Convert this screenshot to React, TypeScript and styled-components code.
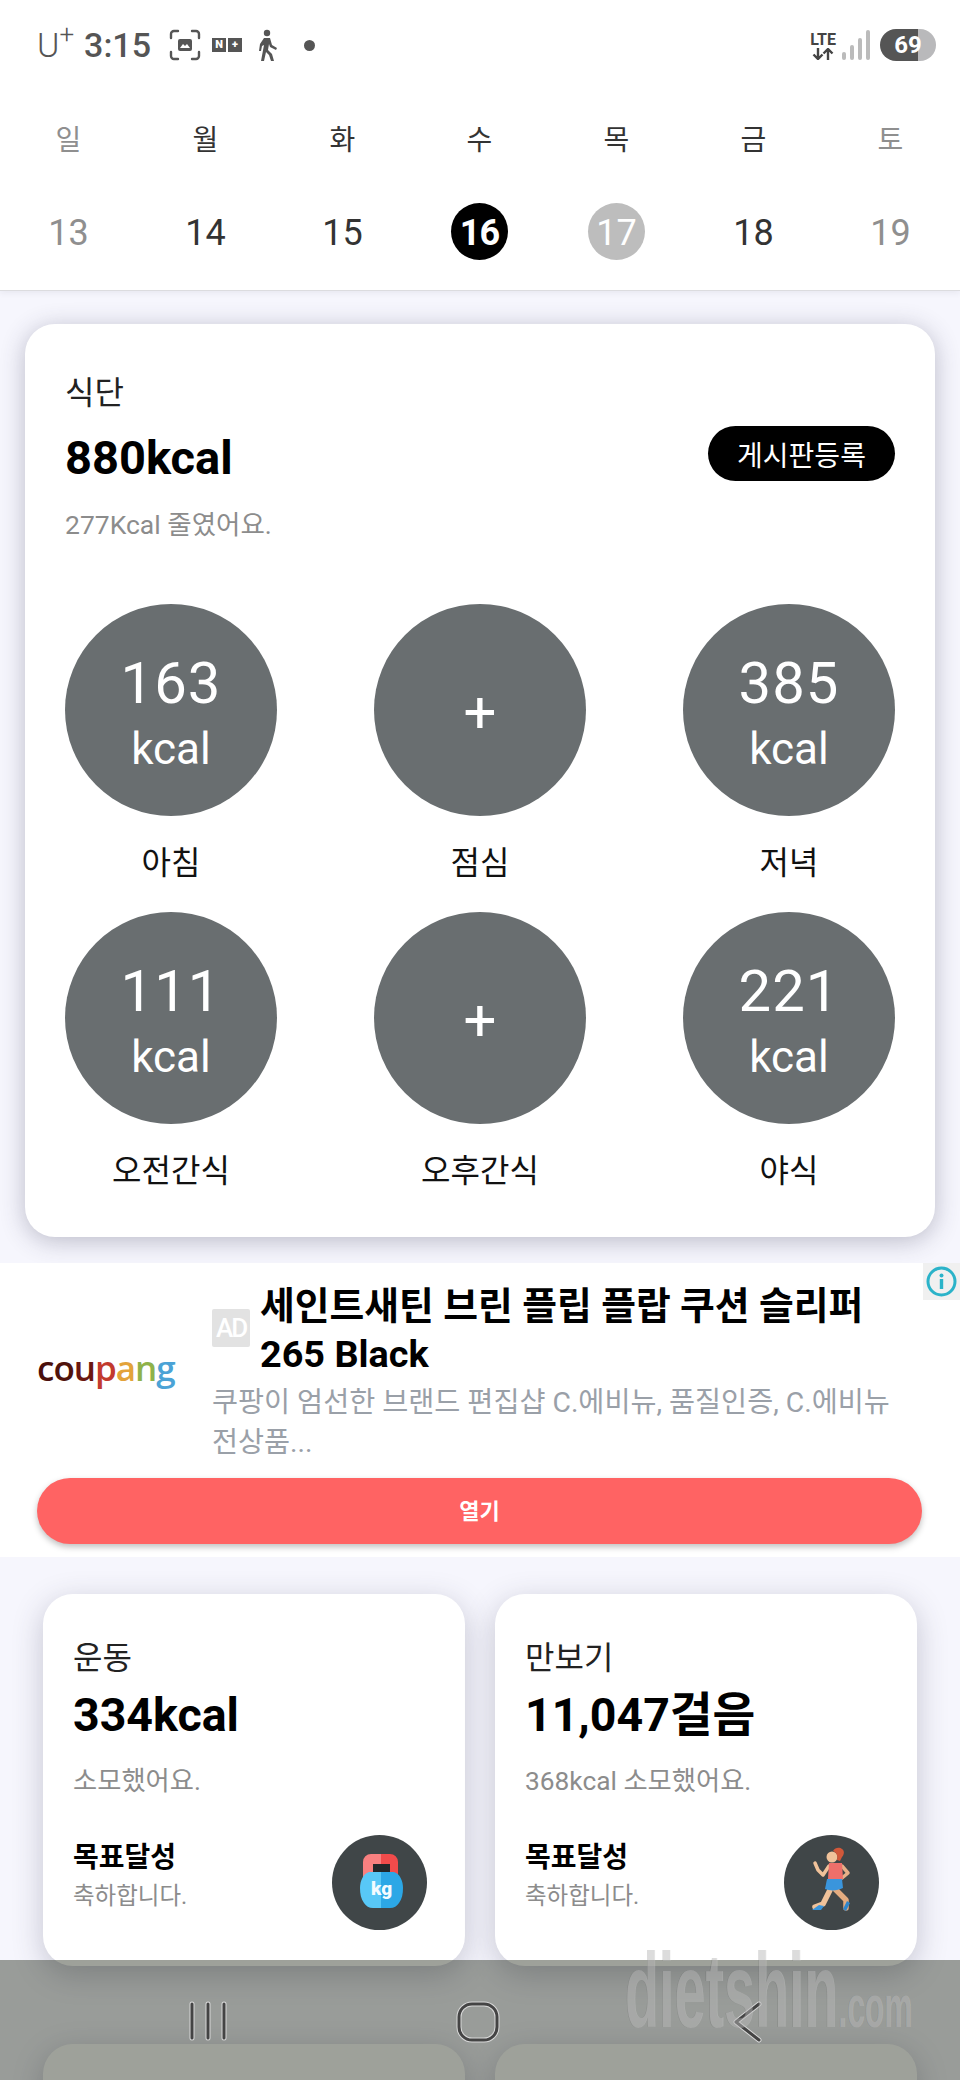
import React from 'react'
import styled, { createGlobalStyle } from 'styled-components'

const GlobalStyle = createGlobalStyle`
    html, body {
        margin: 0;
        padding: 0;
        background: #f6f6fd;
    }
    * {
        box-sizing: border-box;
    }
`

const weekDays = [
    { name: '일', date: 13, tone: 'muted' },
    { name: '월', date: 14, tone: 'plain' },
    { name: '화', date: 15, tone: 'plain' },
    { name: '수', date: 16, tone: 'today' },
    { name: '목', date: 17, tone: 'picked' },
    { name: '금', date: 18, tone: 'plain' },
    { name: '토', date: 19, tone: 'muted' },
]

const meals = [
    { label: '아침', kcal: '163' },
    { label: '점심' },
    { label: '저녁', kcal: '385' },
    { label: '오전간식', kcal: '111' },
    { label: '오후간식' },
    { label: '야식', kcal: '221' },
]

const KettlebellIcon = () => (
    <svg width="95" height="95" viewBox="0 0 95 95">
        <path d="M31 42V27a8 8 0 0 1 8-8h10v10h-8v13z" fill="#f98080" />
        <path d="M66 42V27a8 8 0 0 0-8-8h-9v10h9v13z" fill="#f24b4b" />
        <rect x="41" y="29" width="17" height="9" fill="#23282b" />
        <path d="M49 37H37c-6 2-9 9-9 16 0 6 1 11 4 15 2 3 5 5 9 5h8z" fill="#58c8f7" />
        <path d="M49 37h13c6 2 9 9 9 16 0 6-1 11-4 15-2 3-5 5-9 5h-9z" fill="#2ca7e6" />
        <text x="49.500" y="60" textAnchor="middle" fontFamily="Roboto, sans-serif" fontWeight="900" fontSize="19" fill="#f4fbff">kg</text>
    </svg>
)

const RunnerIcon = () => (
    <svg width="95" height="95" viewBox="0 0 95 95">
        <path d="M45 31l-6 9-5-5-3-7" fill="none" stroke="#f0c29a" strokeWidth="3.500" strokeLinecap="round" strokeLinejoin="round" />
        <path d="M58 31l6 7-6 5" fill="none" stroke="#e6b088" strokeWidth="3.500" strokeLinecap="round" strokeLinejoin="round" />
        <path d="M46 55l-7 14-8 3" fill="none" stroke="#f0c29a" strokeWidth="5.500" strokeLinecap="round" strokeLinejoin="round" />
        <path d="M51 54l11 11v8" fill="none" stroke="#e4ac80" strokeWidth="5.500" strokeLinecap="round" strokeLinejoin="round" />
        <path d="M45 28h13l1 16H44z" fill="#ee6f6a" />
        <path d="M43 44h15l1 9c-6 3-13 3-18 1z" fill="#3a95dc" />
        <path d="M28 75l7-5 5 1-3 4z" fill="#3a95dc" />
        <path d="M63 66l3 2-4 8-3-2z" fill="#2f86cc" />
        <circle cx="48" cy="22" r="5.500" fill="#f0c29a" />
        <path d="M49 16c2-4 7-4 9-2 3 2 2 6 0 8l-2 4-3-1c1-4 0-7-4-9z" fill="#d1583a" />
    </svg>
)

const GoalBlock = () => (
    <GoalBody>
        <GoalTitle>목표달성</GoalTitle>
        <GoalText>축하합니다.</GoalText>
    </GoalBody>
)

const App = () => {
    return (
        <Page>
            <GlobalStyle />

            <Header>
                <StatusBar>
                    <Carrier>U<sup>+</sup></Carrier>
                    <Clock>3:15</Clock>
                    <svg width="32" height="32" viewBox="0 0 32 32" fill="none" stroke="#555" strokeWidth="2.4" strokeLinecap="round">
                        <path d="M2 9V5a3 3 0 0 1 3-3h4M23 2h4a3 3 0 0 1 3 3v4M30 23v4a3 3 0 0 1-3 3h-4M9 30H5a3 3 0 0 1-3-3v-4" />
                        <rect x="9" y="10" width="14" height="12" rx="2" fill="#555" stroke="none" />
                        <path d="M11 19l3-4 2 2 2-2 3 4z" fill="#fff" stroke="none" />
                    </svg>
                    <NaverBadge>
                        <span>N</span>
                        <span>+</span>
                    </NaverBadge>
                    <svg width="22" height="32" viewBox="0 0 22 32" fill="#555">
                        <circle cx="11" cy="4" r="3.2" />
                        <path d="M8 9h6l2 7 5 3-1 2-6-3-1-3-1 6 4 4 2 7h-3l-2-6-3-3-2 9H5l3-16-2 1-1 5H3l1-7z" />
                    </svg>
                    <Dot />
                    <StatusRight>
                        <NetworkBadge>
                            <span>LTE</span>
                            <svg width="22" height="12" viewBox="0 0 22 12" fill="none" stroke="#444" strokeWidth="2.4">
                                <path d="M6 0v11M1.5 6.5L6 11l4.500-4.500M16 12V1M11.500 5.500L16 1l4.500 4.500" />
                            </svg>
                        </NetworkBadge>
                        <svg width="28" height="30" viewBox="0 0 28 30" fill="#bbb">
                            <rect x="0" y="22" width="4" height="8" rx="2" />
                            <rect x="8" y="15" width="4" height="15" rx="2" />
                            <rect x="16" y="8" width="4" height="22" rx="2" />
                            <rect x="24" y="0" width="4" height="30" rx="2" />
                        </svg>
                        <Battery>69</Battery>
                    </StatusRight>
                </StatusBar>

                <WeekRow>
                    {weekDays.map((d) => (
                        <DayName key={d.name} $muted={d.tone === 'muted'}>{d.name}</DayName>
                    ))}
                </WeekRow>
                <WeekRow>
                    {weekDays.map((d) => (
                        <DateCell key={d.date}>
                            <DateNumber $tone={d.tone}>{d.date}</DateNumber>
                        </DateCell>
                    ))}
                </WeekRow>
            </Header>

            <DietCard>
                <CardLabel>식단</CardLabel>
                <TotalRow>
                    <BigValue>880kcal</BigValue>
                    <BoardButton>게시판등록</BoardButton>
                </TotalRow>
                <Note>277Kcal 줄였어요.</Note>
                <MealGrid>
                    {meals.map((m) => (
                        <Meal key={m.label}>
                            <MealCircle>
                                {m.kcal ? (
                                    <>
                                        <MealKcal>{m.kcal}</MealKcal>
                                        <MealUnit>kcal</MealUnit>
                                    </>
                                ) : (
                                    <MealPlus>+</MealPlus>
                                )}
                            </MealCircle>
                            <MealLabel>{m.label}</MealLabel>
                        </Meal>
                    ))}
                </MealGrid>
            </DietCard>

            <AdBanner>
                <InfoCorner>
                    <svg width="31" height="31" viewBox="0 0 31 31">
                        <circle cx="15.500" cy="15.500" r="13.500" fill="none" stroke="#2bb3c9" strokeWidth="3" />
                        <circle cx="15.500" cy="9.500" r="2" fill="#2bb3c9" />
                        <rect x="13.800" y="13" width="3.400" height="10" fill="#2bb3c9" />
                    </svg>
                </InfoCorner>
                <AdBody>
                    <CoupangLogo>
                        <span style={{ color: '#4a0f0c' }}>c</span>
                        <span style={{ color: '#4f130d' }}>o</span>
                        <span style={{ color: '#6b1710' }}>u</span>
                        <span style={{ color: '#c23a2e' }}>p</span>
                        <span style={{ color: '#e3a33a' }}>a</span>
                        <span style={{ color: '#8fb24a' }}>n</span>
                        <span style={{ color: '#4ba3d6' }}>g</span>
                    </CoupangLogo>
                    <AdText>
                        <AdHeadline>
                            <AdBadge>AD</AdBadge>
                            <AdTitle>세인트새틴 브린 플립 플랍 쿠션 슬리퍼 265 Black</AdTitle>
                        </AdHeadline>
                        <AdDesc>쿠팡이 엄선한 브랜드 편집샵 C.에비뉴, 품질인증, C.에비뉴 전상품...</AdDesc>
                    </AdText>
                </AdBody>
                <OpenButton>열기</OpenButton>
            </AdBanner>

            <StatGrid>
                <StatCard>
                    <StatLabel>운동</StatLabel>
                    <StatValue>334kcal</StatValue>
                    <StatNote>소모했어요.</StatNote>
                    <GoalRow>
                        <GoalBlock />
                        <GoalIcon><KettlebellIcon /></GoalIcon>
                    </GoalRow>
                </StatCard>
                <StatCard>
                    <StatLabel>만보기</StatLabel>
                    <StatValue>11,047걸음</StatValue>
                    <StatNote>368kcal 소모했어요.</StatNote>
                    <GoalRow>
                        <GoalBlock />
                        <GoalIcon><RunnerIcon /></GoalIcon>
                    </GoalRow>
                </StatCard>
                <StatCard />
                <StatCard />
            </StatGrid>

            <NavOverlay>
                <NavIcon>
                    <svg width="40" height="40" viewBox="0 0 40 40" fill="none" stroke="#d8d8d8" strokeWidth="5" strokeLinecap="round">
                        <path d="M4 3v34M20 3v34M36 3v34" />
                        <path d="M4 3v34M20 3v34M36 3v34" stroke="#444" strokeWidth="3" />
                    </svg>
                </NavIcon>
                <NavIcon>
                    <svg width="44" height="42" viewBox="0 0 44 42" fill="none">
                        <rect x="3" y="3" width="38" height="36" rx="13" stroke="#d8d8d8" strokeWidth="5" />
                        <rect x="3" y="3" width="38" height="36" rx="13" stroke="#444" strokeWidth="3" />
                    </svg>
                </NavIcon>
                <NavIcon>
                    <svg width="32" height="42" viewBox="0 0 32 42" fill="none" strokeLinecap="round" strokeLinejoin="round">
                        <path d="M27 3L4 21l23 18" stroke="#d8d8d8" strokeWidth="5" />
                        <path d="M27 3L4 21l23 18" stroke="#444" strokeWidth="3" />
                    </svg>
                </NavIcon>
            </NavOverlay>

            <Watermark>dietshin<small>.com</small></Watermark>
        </Page>
    )
}

export default App

const fontStack = `Roboto, "Noto Sans CJK KR", sans-serif`

const Page = styled.div`
    position: relative;
    width: 960px;
    height: 2080px;
    overflow: hidden;
    background: #f6f6fd;
    font-family: ${fontStack};
    color: #111;
`
const Header = styled.header`
    height: 291px;
    background: #fff;
    border-bottom: 1px solid #dcdcdf;
    box-shadow: 0 2px 6px rgba(60, 60, 90, 0.08);
`
const StatusBar = styled.div`
    display: flex;
    align-items: center;
    height: 90px;
    padding: 0 24px 0 37px;
    color: #555;
`
const Carrier = styled.span`
    font-size: 34px;
    font-weight: 300;
    line-height: 34px;
    margin-right: 10px;
    sup {
        font-size: 26px;
        line-height: 0;
        vertical-align: 14px;
    }
`
const Clock = styled.span`
    font-size: 34px;
    font-weight: 500;
    margin-right: 18px;
`
const NaverBadge = styled.span`
    display: flex;
    gap: 2px;
    margin: 0 14px 0 11px;
    span {
        width: 14px;
        height: 14px;
        background: #555;
        color: #fff;
        font-size: 11px;
        font-weight: 900;
        line-height: 14px;
        text-align: center;
    }
`
const Dot = styled.span`
    width: 11px;
    height: 11px;
    margin-left: 26px;
    border-radius: 50%;
    background: #555;
`
const StatusRight = styled.div`
    display: flex;
    align-items: center;
    gap: 6px;
    margin-left: auto;
`
const NetworkBadge = styled.div`
    display: flex;
    flex-direction: column;
    align-items: center;
    color: #444;
    font-size: 16px;
    font-weight: 700;
    line-height: 17px;
    svg {
        display: block;
    }
`
const Battery = styled.div`
    width: 56px;
    height: 32px;
    margin-left: 4px;
    border-radius: 16px;
    background: linear-gradient(90deg, #555 0, #555 38px, #b9b9bb 38px);
    color: #fff;
    font-size: 24px;
    font-weight: 700;
    line-height: 32px;
    text-align: center;
`
const WeekRow = styled.div`
    display: grid;
    grid-template-columns: repeat(7, 137px);
`
const DayName = styled.div<{ $muted?: boolean }>`
    height: 113px;
    padding-top: 32px;
    font-size: 28px;
    line-height: 38px;
    text-align: center;
    color: ${(p) => (p.$muted ? '#8f8f8f' : '#333')};
`
const DateCell = styled.div`
    display: flex;
    justify-content: center;
`
const DateNumber = styled.div<{ $tone: string }>`
    width: 57px;
    height: 57px;
    border-radius: 50%;
    font-size: 36px;
    line-height: 60px;
    text-align: center;
    font-weight: ${(p) => (p.$tone === 'today' ? 700 : 400)};
    letter-spacing: ${(p) => (p.$tone === 'today' ? '-1px' : '0')};
    color: ${(p) => (p.$tone === 'muted' ? '#8f8f8f' : p.$tone === 'plain' ? '#333' : '#fff')};
    background: ${(p) => (p.$tone === 'today' ? '#000' : p.$tone === 'picked' ? '#bdbdbd' : 'transparent')};
`
const DietCard = styled.section`
    width: 910px;
    height: 913px;
    margin: 33px 0 0 25px;
    padding: 46px 40px 0;
    border-radius: 30px;
    background: #fff;
    box-shadow: 0 4px 24px rgba(50, 50, 80, 0.3);
`
const CardLabel = styled.div`
    font-size: 32px;
    line-height: 46px;
    color: #222;
`
const TotalRow = styled.div`
    display: flex;
    align-items: center;
    justify-content: space-between;
    margin-top: 10px;
`
const BigValue = styled.div`
    font-size: 47px;
    font-weight: 700;
    line-height: 62px;
    color: #000;
`
const BoardButton = styled.button`
    width: 187px;
    height: 55px;
    margin-bottom: 8px;
    padding: 0;
    border: none;
    border-radius: 28px;
    background: #000;
    color: #fff;
    font-family: ${fontStack};
    font-size: 28px;
`
const Note = styled.div`
    margin-top: 18px;
    font-size: 26.5px;
    line-height: 36px;
    color: #8c8c8c;
`
const MealGrid = styled.div`
    display: grid;
    grid-template-columns: 212px 212px 212px;
    justify-content: space-between;
    row-gap: 26px;
    margin-top: 61px;
`
const Meal = styled.div`
    display: flex;
    flex-direction: column;
    align-items: center;
`
const MealCircle = styled.div`
    display: flex;
    flex-direction: column;
    align-items: center;
    justify-content: center;
    width: 212px;
    height: 212px;
    padding-top: 10px;
    border-radius: 50%;
    background: #696e70;
    color: #fff;
`
const MealKcal = styled.div`
    font-size: 58px;
    font-weight: 400;
    line-height: 68px;
    letter-spacing: 1px;
`
const MealUnit = styled.div`
    font-size: 44px;
    line-height: 64px;
    font-weight: 400;
`
const MealPlus = styled.div`
    margin-top: -6px;
    font-size: 58px;
    line-height: 58px;
`
const MealLabel = styled.div`
    margin-top: 24px;
    font-size: 32px;
    line-height: 46px;
    color: #111;
`
const AdBanner = styled.section`
    position: relative;
    height: 294px;
    margin-top: 26px;
    padding: 19px 38px 0 37px;
    background: #fff;
`
const InfoCorner = styled.div`
    position: absolute;
    top: 0;
    right: 0;
    display: flex;
    align-items: center;
    justify-content: center;
    width: 37px;
    height: 37px;
    background: #f0f0f0;
`
const AdBody = styled.div`
    display: flex;
    align-items: flex-start;
    height: 196px;
`
const CoupangLogo = styled.div`
    flex: 0 0 175px;
    margin-top: 62px;
    font-family: "Open Sans", sans-serif;
    font-size: 35px;
    font-weight: 600;
    line-height: 48px;
    letter-spacing: -1px;
`
const AdText = styled.div`
    width: 700px;
`
const AdHeadline = styled.div`
    display: flex;
    align-items: center;
    gap: 10px;
`
const AdBadge = styled.div`
    flex: none;
    width: 38px;
    height: 38px;
    margin-bottom: 4px;
    border-radius: 2px;
    background: #e2e2e2;
    color: #fff;
    font-size: 26px;
    font-weight: 500;
    line-height: 38px;
    text-align: center;
    letter-spacing: -2px;
`
const AdTitle = styled.div`
    font-size: 37.8px;
    font-weight: 700;
    line-height: 48px;
    color: #000;
`
const AdDesc = styled.div`
    margin-top: 5px;
    font-size: 28.3px;
    line-height: 40px;
    color: #9aa0a8;
    word-break: keep-all;
`
const OpenButton = styled.button`
    display: block;
    width: 885px;
    height: 66px;
    padding: 0 0 4px;
    border: none;
    border-radius: 33px;
    background: #ff6363;
    color: #fff;
    font-family: ${fontStack};
    font-size: 22px;
    font-weight: 700;
    box-shadow: 0 3px 6px rgba(0, 0, 0, 0.25);
`
const StatGrid = styled.div`
    display: grid;
    grid-template-columns: 422px 422px;
    column-gap: 30px;
    row-gap: 78px;
    margin: 37px 0 0 43px;
`
const StatCard = styled.article`
    height: 372px;
    padding: 41px 30px 0;
    border-radius: 30px;
    background: #fff;
    box-shadow: 0 8px 30px rgba(50, 50, 80, 0.25);
`
const StatLabel = styled.div`
    font-size: 32px;
    line-height: 46px;
    color: #222;
`
const StatValue = styled.div`
    margin-top: 3px;
    font-size: 46.5px;
    font-weight: 700;
    line-height: 62px;
    color: #000;
`
const StatNote = styled.div`
    margin-top: 17px;
    font-size: 26.3px;
    line-height: 36px;
    color: #8c8c8c;
`
const GoalRow = styled.div`
    display: flex;
    align-items: center;
    justify-content: space-between;
    margin-top: 36px;
    padding-right: 8px;
`
const GoalBody = styled.div`
    margin-bottom: 12px;
`
const GoalTitle = styled.div`
    font-size: 28px;
    font-weight: 700;
    line-height: 38px;
    color: #000;
`
const GoalText = styled.div`
    font-size: 23.5px;
    line-height: 38px;
    color: #8c8c8c;
`
const GoalIcon = styled.div`
    display: flex;
    width: 95px;
    height: 95px;
    border-radius: 50%;
    background: #404648;
`
const NavOverlay = styled.nav`
    position: absolute;
    left: 0;
    bottom: 0;
    display: grid;
    grid-template-columns: repeat(3, 270px);
    width: 100%;
    height: 120px;
    padding-left: 73px;
    background: rgba(25, 30, 15, 0.42);
`
const NavIcon = styled.div`
    display: flex;
    justify-content: center;
    padding-top: 41px;
`
const Watermark = styled.div`
    position: absolute;
    left: 625px;
    top: 1926px;
    font-family: "Liberation Sans", sans-serif;
    font-size: 105px;
    font-weight: 700;
    line-height: 130px;
    color: rgba(220, 220, 220, 0.35);
    text-shadow: -1px 0 0 rgba(80, 80, 80, 0.2);
    white-space: nowrap;
    transform: scaleX(0.53);
    transform-origin: left center;
    small {
        font-size: 60px;
    }
`
